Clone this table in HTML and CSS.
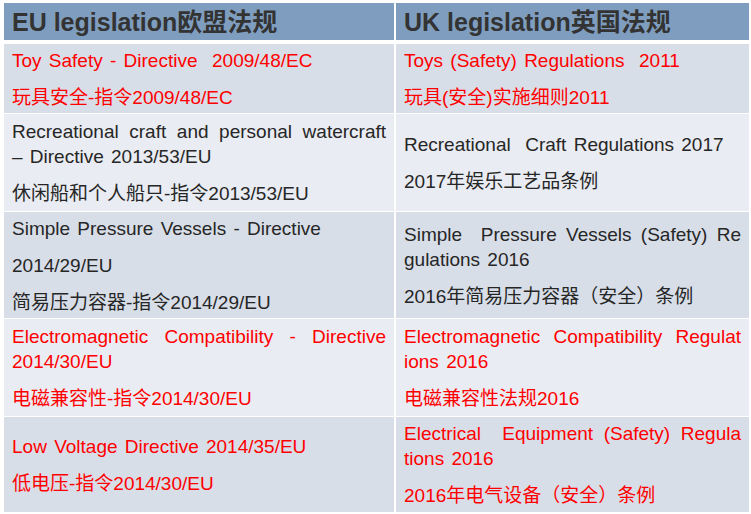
FILE: index.html
```html
<!DOCTYPE html>
<html lang="zh-CN">
<head>
<meta charset="utf-8">
<title>EU / UK legislation</title>
<link rel="stylesheet" href="styles.css">
</head>
<body>
<div class="table">
  <div class="row head">
    <div class="cell">EU legislation欧盟法规</div>
    <div class="cell">UK legislation英国法规</div>
  </div>
  <div class="row dark row-toys">
    <div class="cell red">
      <p>Toy Safety - Directive&nbsp; 2009/48/EC</p>
      <p>玩具安全-指令2009/48/EC</p>
    </div>
    <div class="cell red">
      <p>Toys (Safety) Regulations&nbsp; 2011</p>
      <p>玩具(安全)实施细则2011</p>
    </div>
  </div>
  <div class="row light row-craft">
    <div class="cell">
      <p><span class="line-full">Recreational craft and personal watercraft</span>– Directive 2013/53/EU</p>
      <p>休闲船和个人船只-指令2013/53/EU</p>
    </div>
    <div class="cell">
      <p>Recreational&nbsp; Craft Regulations 2017</p>
      <p>2017年娱乐工艺品条例</p>
    </div>
  </div>
  <div class="row dark row-vessels">
    <div class="cell">
      <p>Simple Pressure Vessels - Directive</p>
      <p>2014/29/EU</p>
      <p>简易压力容器-指令2014/29/EU</p>
    </div>
    <div class="cell">
      <p><span class="line-full">Simple&nbsp; Pressure Vessels (Safety) Re</span>gulations 2016</p>
      <p>2016年简易压力容器（安全）条例</p>
    </div>
  </div>
  <div class="row light row-emc">
    <div class="cell red">
      <p>Electromagnetic Compatibility - Directive 2014/30/EU</p>
      <p>电磁兼容性-指令2014/30/EU</p>
    </div>
    <div class="cell red">
      <p><span class="line-full">Electromagnetic Compatibility Regulat</span>ions 2016</p>
      <p>电磁兼容性法规2016</p>
    </div>
  </div>
  <div class="row dark row-lvd">
    <div class="cell red">
      <p>Low Voltage Directive 2014/35/EU</p>
      <p>低电压-指令2014/30/EU</p>
    </div>
    <div class="cell red">
      <p><span class="line-full">Electrical&nbsp; Equipment (Safety) Regula</span>tions 2016</p>
      <p>2016年电气设备（安全）条例</p>
    </div>
  </div>
</div>
</body>
</html>
```
FILE: styles.css
```css
html, body {
  margin: 0;
  background: #ffffff;
}

body {
  font-family: "Liberation Sans", "Noto Sans CJK SC", sans-serif;
  color: #262626;
}

.table {
  display: flex;
  flex-direction: column;
  gap: 1px;
  padding: 3px 2px 0 4px;
  width: 745px;
}

.row {
  display: grid;
  grid-template-columns: 390px 1fr;
  column-gap: 2px;
}

.cell {
  display: flex;
  flex-direction: column;
  justify-content: center;
  gap: 12px;
  padding: 0 8px;
  font-size: 19px;
  line-height: 25px;
}

.cell p {
  margin: 0;
  text-align: justify;
  word-spacing: 2px;
}

.line-full {
  display: block;
  text-align: justify;
  text-align-last: justify;
}

.head {
  height: 37px;
  margin-bottom: 3px;
}

.head .cell {
  background: #7f9ebf;
  color: #333333;
  font-weight: bold;
  font-size: 25px;
  line-height: 30px;
  padding-top: 1px;
}

.dark .cell {
  background: #d8dee8;
}

.light .cell {
  background: #e9ecf2;
}

.red {
  color: #ff0000;
}

.row-toys { height: 69px; }
.row-craft { height: 97px; }
.row-vessels { height: 106px; }
.row-emc { height: 97px; }
.row-lvd { height: 95px; }
```
